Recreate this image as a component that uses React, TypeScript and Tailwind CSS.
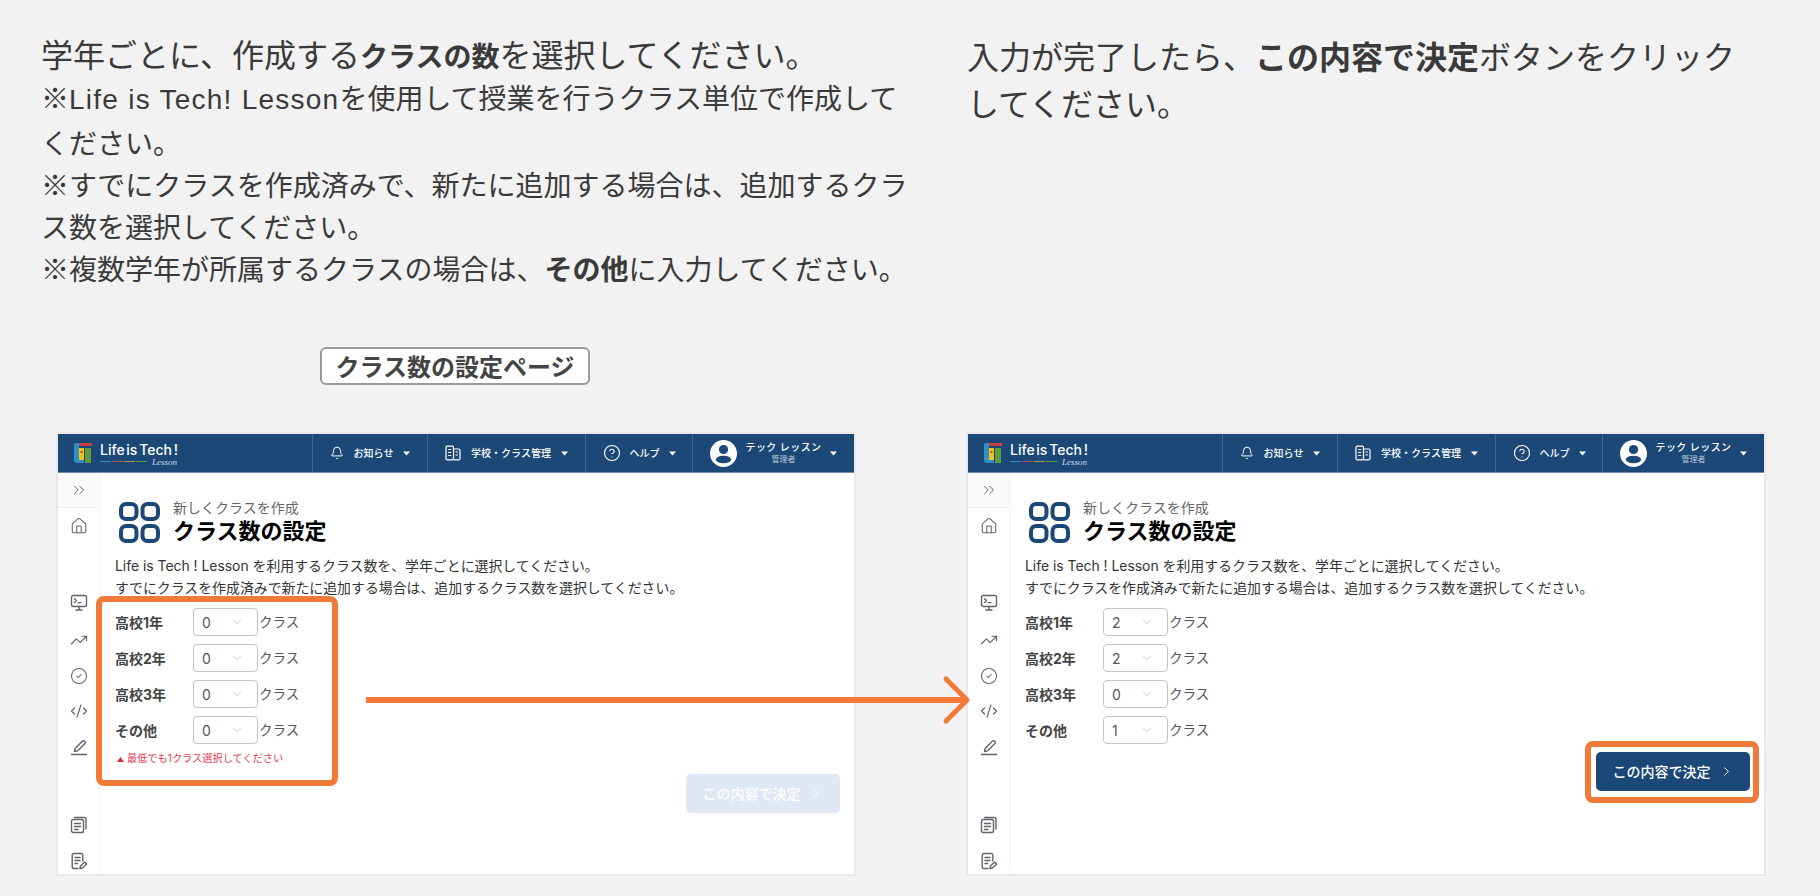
import {
  Bell,
  ChevronDown,
  ChevronRight,
  ChevronsRight,
  CircleCheck,
  CircleHelp,
  CodeXml,
  House,
  TrendingUp,
} from "lucide-react";

const Caret = () => (
  <svg width="7" height="5" viewBox="0 0 7 5" className="shrink-0">
    <path d="M0 0.5h7L3.5 4.5z" fill="#ffffff" />
  </svg>
);

const BuildingIcon = () => (
  <svg width="16" height="16" viewBox="0 0 16 16" fill="none" stroke="#ffffff" strokeWidth="1.2">
    <rect x="1" y="1.2" width="7.5" height="13.6" rx="1.2" />
    <path d="M8.5 4h5.3a1.2 1.2 0 0 1 1.2 1.2v8.4a1.2 1.2 0 0 1-1.2 1.2H8.5" />
    <path d="M3.2 4.500h3M3.2 7.500h3M3.2 10.500h3M10.500 7h2.400M10.500 10h2.400" />
  </svg>
);

const Avatar = () => (
  <svg width="27" height="27" viewBox="0 0 27 27" className="shrink-0">
    <circle cx="13.5" cy="13.5" r="13.5" fill="#ffffff" />
    <circle cx="13.5" cy="9.5" r="4.6" fill="#1b4876" />
    <ellipse cx="13.5" cy="19.5" rx="7.6" ry="3.8" fill="#1b4876" />
  </svg>
);

const Logo = () => (
  <svg width="18" height="20" viewBox="0 0 18 20" className="shrink-0">
    <path d="M0 2a2 2 0 0 1 2-2h3v17h5v3H3a3 3 0 0 1-3-3z" fill="#2f8fc9" />
    <rect x="5" y="0" width="13" height="3" fill="#c9403f" />
    <rect x="5" y="5" width="5" height="12" fill="#f0c419" />
    <rect x="6.5" y="8" width="2" height="2" fill="#c9403f" />
    <rect x="11" y="5" width="6" height="15" fill="#5e9c3c" />
  </svg>
);

const TerminalIcon = () => (
  <svg width="18" height="18" viewBox="0 0 18 18" fill="none" stroke="#5f646b" strokeWidth="1.4" strokeLinecap="round" strokeLinejoin="round">
    <rect x="1.5" y="1.5" width="15" height="11" rx="1.8" />
    <path d="M4.500 4.800l2 1.800-2 1.800M8 8.600h3M9 12.500v3M6 16h6" />
  </svg>
);

const PencilLineIcon = () => (
  <svg width="18" height="18" viewBox="0 0 18 18" fill="none" stroke="#5f646b" strokeWidth="1.4" strokeLinecap="round" strokeLinejoin="round">
    <path d="M1.500 16.500h15" />
    <path d="M4.500 13.500l.6-3 7.400-7.400a1.400 1.400 0 0 1 2 0l.4.400a1.400 1.400 0 0 1 0 2l-7.400 7.400z" />
  </svg>
);

const DocsIcon = () => (
  <svg width="18" height="18" viewBox="0 0 18 18" fill="none" stroke="#5f646b" strokeWidth="1.4" strokeLinecap="round" strokeLinejoin="round">
    <rect x="1.500" y="3.500" width="12" height="13" rx="1.800" />
    <path d="M4.500 1.500h9.500a2 2 0 0 1 2 2V13M4.500 7.500h6M4.500 10.500h6M4.500 13.500h3.500" />
  </svg>
);

const NoteEditIcon = () => (
  <svg width="18" height="18" viewBox="0 0 18 18" fill="none" stroke="#5f646b" strokeWidth="1.4" strokeLinecap="round" strokeLinejoin="round">
    <path d="M8 16.500H4a1.800 1.800 0 0 1-1.800-1.800V3.300A1.800 1.800 0 0 1 4 1.500h7a1.800 1.800 0 0 1 1.800 1.800V9" />
    <path d="M5 5.500h5M5 8.500h5M5 11.500h2.500M10 16.500l.5-2.500 4.200-4 2 2-4.200 4z" />
  </svg>
);

const ClassGridIcon = () => (
  <svg width="41" height="41" viewBox="0 0 41 41" fill="none" stroke="#1b4876" strokeWidth="4" className="shrink-0">
    <rect x="2" y="2" width="15.500" height="15" rx="5" />
    <rect x="23.500" y="2" width="15.500" height="15" rx="5" />
    <rect x="2" y="24" width="15.500" height="15" rx="5" />
    <rect x="23.500" y="24" width="15.500" height="15" rx="5" />
  </svg>
);

const Header = () => (
  <div className="flex h-[39px] shrink-0 border-b border-[#6f8fb0] bg-[#1b4876] text-white">
    <div className="flex w-[254px] items-center pl-[16px]">
      <Logo />
      <div className="ml-[8px] flex flex-col">
        <span className="text-[14px] leading-[17px] font-medium whitespace-nowrap [word-spacing:-2px]">
          Life is Tech !
        </span>
        <div className="flex items-center gap-[1px]">
          <span className="h-px w-[11px] bg-[#2f8fc9]" />
          <span className="h-px w-[11px] bg-[#b5505a]" />
          <span className="h-px w-[11px] bg-[#a89a3c]" />
          <span className="h-px w-[11px] bg-[#5e9c3c]" />
          <span className="ml-[4px] font-['Liberation_Serif',serif] text-[9px] leading-[8px] text-[#d5dde6] italic">
            Lesson
          </span>
        </div>
      </div>
    </div>
    <div className="flex w-[115px] items-center justify-center gap-[10px] border-l border-[#3a6690]">
      <Bell size={14} strokeWidth={1.7} />
      <span className="text-[10px] font-medium whitespace-nowrap">お知らせ</span>
      <Caret />
    </div>
    <div className="flex w-[158px] items-center justify-center gap-[10px] border-l border-[#3a6690]">
      <BuildingIcon />
      <span className="text-[10px] font-medium whitespace-nowrap">学校・クラス管理</span>
      <Caret />
    </div>
    <div className="flex w-[107px] items-center justify-center gap-[9px] border-l border-[#3a6690]">
      <CircleHelp size={18} strokeWidth={1.5} />
      <span className="text-[10px] font-medium whitespace-nowrap">ヘルプ</span>
      <Caret />
    </div>
    <div className="flex flex-1 items-center justify-center gap-[9px] border-l border-[#3a6690]">
      <Avatar />
      <div className="flex flex-col items-center">
        <span className="text-[10px] leading-[13px] font-medium tracking-[0.4px] whitespace-nowrap">
          テック レッスン
        </span>
        <span className="text-[8px] leading-[11px] text-[#b9c7d6]">管理者</span>
      </div>
      <Caret />
    </div>
  </div>
);

const Sidebar = () => (
  <div className="flex w-[41px] shrink-0 flex-col items-center bg-white text-[#5f646b] shadow-[1px_0_3px_rgba(0,0,0,0.06)]">
    <div className="flex h-[35px] w-full items-center justify-center border-b border-[#f0f0f0] bg-[#fafafa]">
      <ChevronsRight size={18} strokeWidth={1.3} />
    </div>
    <div className="mt-[9px]">
      <House size={18} strokeWidth={1.4} />
    </div>
    <div className="mt-[59px]">
      <TerminalIcon />
    </div>
    <div className="mt-[19px]">
      <TrendingUp size={18} strokeWidth={1.6} />
    </div>
    <div className="mt-[18px]">
      <CircleCheck size={18} strokeWidth={1.4} />
    </div>
    <div className="mt-[17px]">
      <CodeXml size={18} strokeWidth={1.6} />
    </div>
    <div className="mt-[18px]">
      <PencilLineIcon />
    </div>
    <div className="mt-[60px]">
      <DocsIcon />
    </div>
    <div className="mt-[18px]">
      <NoteEditIcon />
    </div>
  </div>
);

const GradeRow = ({ label, value }: { label: string; value: number }) => (
  <div className="flex h-[28px] items-center">
    <span className="w-[78px] text-[14px] font-bold text-[#444444]">{label}</span>
    <div className="flex h-[28px] w-[65px] items-center justify-between rounded-[4px] border border-[#c4c4c4] bg-white pr-[13px] pl-[8px]">
      <span className="text-[14px] text-[#555555]">{value}</span>
      <ChevronDown size={14} strokeWidth={1.2} className="text-[#b5b5b5]" />
    </div>
    <span className="ml-[1px] text-[13.5px] text-[#555555]">クラス</span>
  </div>
);

const grades = ["高校1年", "高校2年", "高校3年", "その他"];

const ClassWindow = ({ values, ready }: { values: number[]; ready: boolean }) => (
  <div className="flex h-[444px] w-[800px] flex-col overflow-hidden border-2 border-[#e9e9e9] bg-white">
    <Header />
    <div className="flex flex-1">
      <Sidebar />
      <div className="flex flex-1 flex-col pt-[29px] pr-[14px] pl-[16px]">
        <div className="flex items-start gap-[13px] pl-[4px]">
          <ClassGridIcon />
          <div className="-mt-[3px] flex flex-col">
            <span className="text-[14px] leading-[17px] text-[#666666]">新しくクラスを作成</span>
            <span className="mt-[1px] text-[22px] leading-[28px] font-bold text-black">クラス数の設定</span>
          </div>
        </div>
        <p className="mt-[10px] text-[13.9px] leading-[22px] text-[#333333]">
          Life is Tech ! Lesson を利用するクラス数を、学年ごとに選択してください。
          <br />
          すでにクラスを作成済みで新たに追加する場合は、追加するクラス数を選択してください。
        </p>
        <div className="relative mt-[9px] flex flex-col">
          <div className="flex flex-col gap-[8px]">
            {grades.map((grade, i) => (
              <GradeRow key={grade} label={grade} value={values[i]} />
            ))}
          </div>
          {!ready && (
            <>
              <div className="mt-[8px] flex h-[14px] items-center gap-[3px] pl-[2px] text-[10.2px] text-[#e6394f]">
                <svg width="7" height="5" viewBox="0 0 7 5">
                  <path d="M3.500 0L7 5H0z" fill="#d92c3f" />
                </svg>
                <span>最低でも1クラス選択してください</span>
              </div>
              <div className="absolute top-[-12px] left-[-19px] h-[190px] w-[242px] rounded-[8px] border-[6px] border-[#f27a38]" />
            </>
          )}
        </div>
        <div className="relative mt-[8px] self-end">
          <button
            className={
              ready
                ? "flex h-[39px] w-[154px] items-center justify-center gap-[8px] rounded-[5px] bg-[#1b4876] text-[14px] font-medium text-white"
                : "flex h-[39px] w-[154px] items-center justify-center gap-[8px] rounded-[5px] bg-[#dfe9f5] text-[14px] font-medium text-white"
            }
          >
            この内容で決定
            <ChevronRight size={15} strokeWidth={1.6} />
          </button>
          {ready && (
            <div className="absolute top-[-11px] right-[-9px] bottom-[-12px] left-[-11px] rounded-[8px] border-[6px] border-[#f27a38]" />
          )}
        </div>
      </div>
    </div>
  </div>
);

export default function App() {
  return (
    <div className="relative flex h-[896px] w-[1820px] overflow-hidden bg-[#f2f2f2] font-['Inter','Noto_Sans_CJK_JP',sans-serif]">
      <div className="flex w-[909px] flex-col pb-[20px]">
        <div className="mt-[32px] ml-[41px] h-[257px] w-[870px] font-['Noto_Sans_CJK_JP',sans-serif] text-[28px] leading-[42px] text-[#3a3a3a]">
          <div className="text-[32px]">
            学年ごとに、作成する<b className="text-[28px] font-bold">クラスの数</b>を選択してください。
          </div>
          <div>
            ※
            <span className="font-['Liberation_Sans',sans-serif] tracking-[1.25px]">Life is Tech! Lesson</span>
            を使用して授業を行うクラス単位で作成してください。
          </div>
          <div>※すでにクラスを作成済みで、新たに追加する場合は、追加するクラス数を選択してください。</div>
          <div>
            ※複数学年が所属するクラスの場合は、<b className="font-bold">その他</b>に入力してください。
          </div>
        </div>
        <div className="mt-[58px] ml-[320px] flex h-[38px] w-[270px] items-center justify-center self-start rounded-[6px] border-2 border-[#9a9a9a] bg-white font-['Noto_Sans_CJK_JP',sans-serif] text-[24px] font-bold text-[#444444]">
          クラス数の設定ページ
        </div>
        <div className="mt-auto ml-[56px]">
          <ClassWindow values={[0, 0, 0, 0]} ready={false} />
        </div>
      </div>
      <div className="flex flex-1 flex-col pb-[20px]">
        <div className="mt-[32px] ml-[58px] w-[790px] font-['Noto_Sans_CJK_JP',sans-serif] text-[32px] leading-[47px] text-[#3a3a3a]">
          入力が完了したら、<b className="font-bold">この内容で決定</b>ボタンをクリックしてください。
        </div>
        <div className="mt-auto ml-[57px]">
          <ClassWindow values={[2, 2, 0, 1]} ready={true} />
        </div>
      </div>
      <svg width="615" height="60" viewBox="0 0 615 60" fill="none" className="absolute top-[670px] left-[360px]">
        <path d="M6 30H606" stroke="#f27a38" strokeWidth="6" />
        <path d="M586 9L607 30L586 51" stroke="#f27a38" strokeWidth="5" strokeLinecap="round" strokeLinejoin="round" />
      </svg>
    </div>
  );
}
